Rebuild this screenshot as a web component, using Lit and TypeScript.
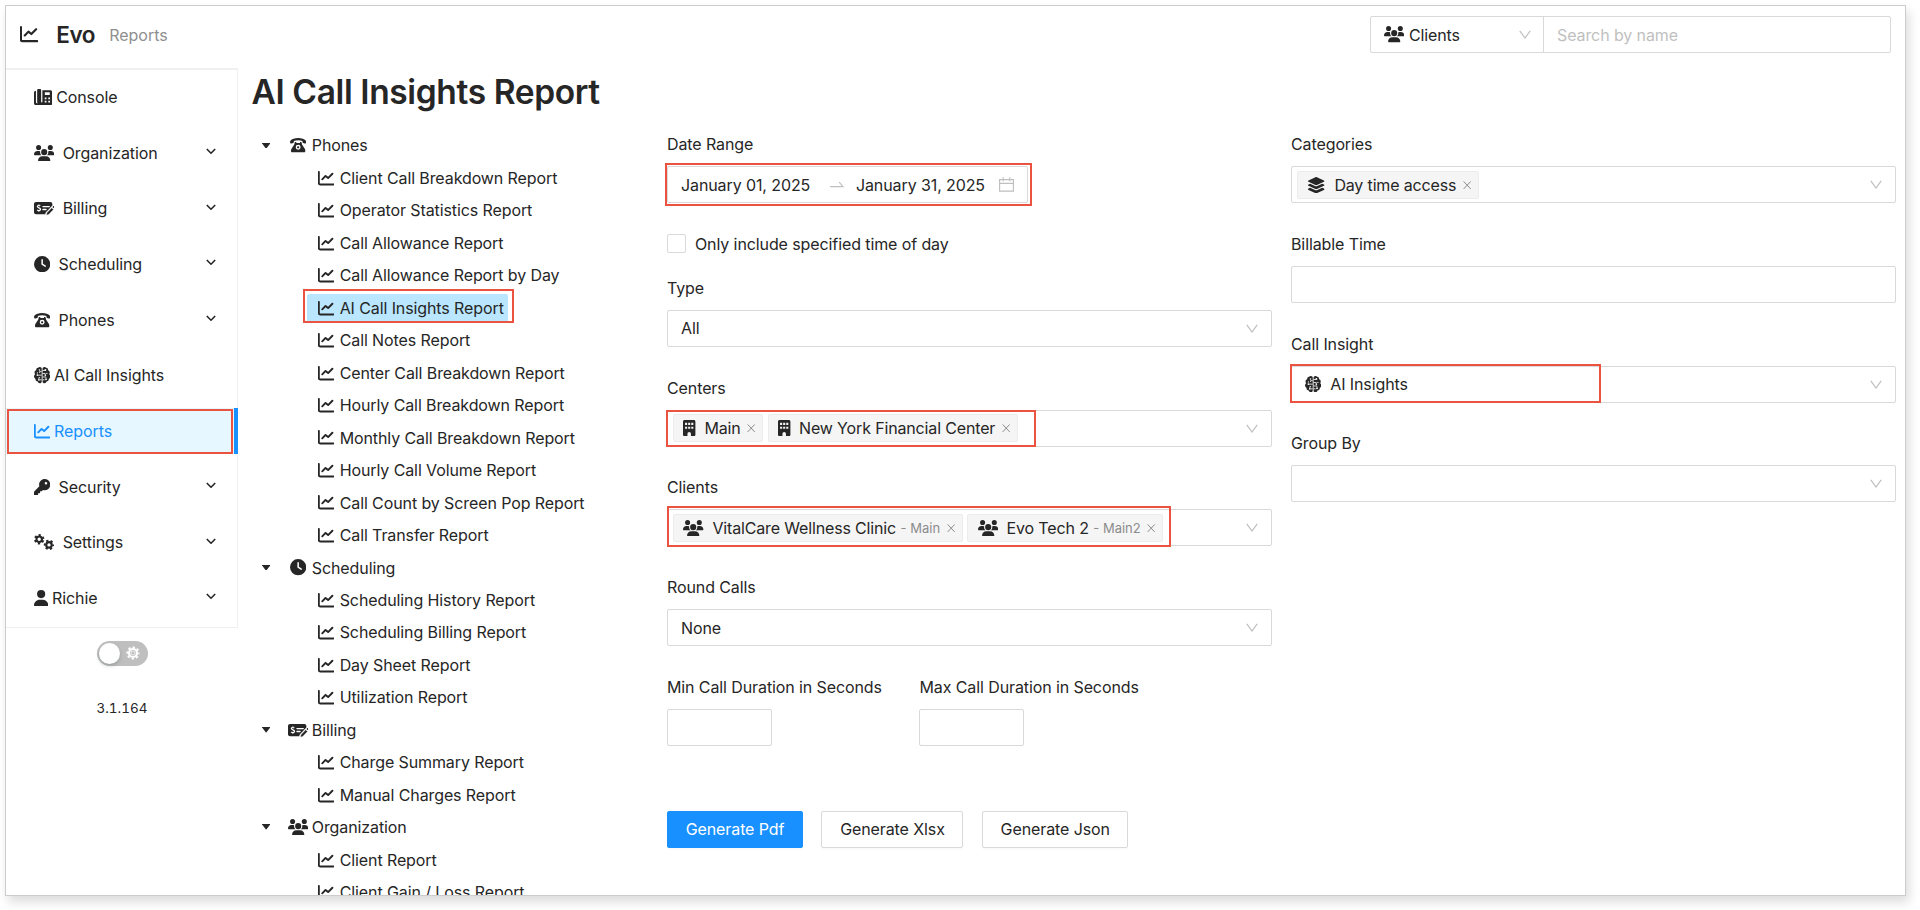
import { LitElement, html, svg, css, nothing } from "lit";
import { customElement } from "lit/decorators.js";
import { classMap } from "lit/directives/class-map.js";

type IconDef = { w: number; h: number; box: string; body: unknown };

const ICONS: Record<string, IconDef> = {
  chart: {
    w: 16.3, h: 16.3, box: "0 0 512 512",
    body: svg`<path d="M26 58V408c0 27 21 46 46 46H486M134 294L237 186L318 254L452 118" fill="none" stroke="currentColor" stroke-width="60" stroke-linecap="round" stroke-linejoin="round"/>`,
  },
  users: {
    w: 20.4, h: 16.3, box: "0 0 640 512",
    body: svg`<path d="M144 0a80 80 0 1 1 0 160A80 80 0 1 1 144 0zM512 0a80 80 0 1 1 0 160A80 80 0 1 1 512 0zM0 298.7C0 239.8 47.8 192 106.7 192h42.7c15.9 0 31 3.5 44.6 9.7c-1.3 7.2-1.9 14.7-1.9 22.3c0 38.2 16.8 72.5 43.3 96c-.2 0-.4 0-.7 0H21.3C9.6 320 0 310.4 0 298.7zM405.3 320c-.2 0-.4 0-.7 0c26.6-23.5 43.3-57.8 43.3-96c0-7.6-.7-15-1.9-22.3c13.6-6.3 28.7-9.7 44.6-9.7h42.7C592.2 192 640 239.8 640 298.7c0 11.8-9.6 21.3-21.3 21.3H405.3zM224 224a96 96 0 1 1 192 0 96 96 0 1 1 -192 0zM128 485.3C128 411.7 187.7 352 261.3 352H378.7C452.3 352 512 411.7 512 485.3c0 14.7-11.9 26.7-26.7 26.7H154.7c-14.7 0-26.7-11.9-26.7-26.7z"/>`,
  },
  console: {
    w: 18.4, h: 16.3, box: "0 0 18 16",
    body: svg`<path d="M1.900 1.600C.8 1.600 0 2.400 0 3.500V14C0 15.200.9 16 2 16H16C17.200 16 18 15.200 18 14V3.200C18 2 17.200 1.200 16 1.200H8.200V12.600A.6.6 0 0 1 7 12.600V1.300C7 .5 6.500 0 5.800 0H4.400C3.700 0 3.100.5 3.100 1.300V12.900A1.100 1.100 0 0 0 4.200 14H3A1.300 1.300 0 0 1 1.900 12.700zM10.600 3.200H15.400V6H10.600zM10.500 8.300H12.200V10H10.500zM14 8.300H15.700V10H14zM10.500 11.600H12.200V13.300H10.500zM14 11.600H15.700V13.300H14z" fill-rule="evenodd"/>`,
  },
  billing: {
    w: 20.4, h: 16.3, box: "0 0 20 16",
    body: svg`<path d="M2 2H16C17.200 2 18 2.900 18 4V5.400L11.500 12.200L11 14H2C.9 14 0 13.100 0 12V4C0 2.900.9 2 2 2z"/><path d="M6.200 5.900C5.800 5.500 5.300 5.400 4.700 5.400C3.900 5.400 3.300 5.800 3.300 6.500C3.300 8.100 6.400 7.400 6.400 9.100C6.400 9.900 5.700 10.400 4.800 10.400C4.100 10.400 3.500 10.200 3.100 9.800M4.800 4.300V5.400M4.800 10.400V11.600" fill="none" stroke="#fff" stroke-width="1.200"/><path d="M8.800 6.500H15M8.800 9.300H11.800" stroke="#fff" stroke-width="1.300" stroke-linecap="round"/><path d="M12.600 12.500L17.300 7.600L19.200 9.400L14.500 14.300L12 15z" stroke="#fff" stroke-width=".5"/><path d="M18 6.900L18.600 6.300C19 5.900 19.400 5.900 19.800 6.300C20.200 6.700 20.200 7.200 19.800 7.600L19.400 8.200z"/>`,
  },
  clock: {
    w: 16.3, h: 16.3, box: "0 0 512 512",
    body: svg`<path d="M256 0a256 256 0 1 1 0 512A256 256 0 1 1 256 0zM232 120V256c0 8 4 15.500 10.700 20l96 64c11 7.400 25.900 4.400 33.300-6.700s4.400-25.900-6.700-33.300L280 243.200V120c0-13.300-10.700-24-24-24s-24 10.700-24 24z"/>`,
  },
  phone: {
    w: 16.3, h: 16.3, box: "0 0 16 16",
    body: svg`<path d="M8 1C4.600 1 1.900 2 .4 3.700C0 4.200 0 4.700.1 5.300L.3 5.900C.5 6.400.9 6.600 1.400 6.400L3.100 5.800C3.600 5.600 3.800 5.300 3.800 4.800V3.900C6.300 3 9.700 3 12.200 3.900V4.800C12.200 5.300 12.400 5.600 12.900 5.800L14.600 6.400C15.100 6.600 15.500 6.400 15.700 5.900L15.900 5.300C16 4.700 16 4.200 15.600 3.700C14.100 2 11.400 1 8 1z"/><path d="M5.200 5H6.200V6H9.800V5H10.800C11.100 5 11.300 5.200 11.400 5.500L11.800 7.300L14.500 11.500C14.800 12 15 12.500 15 13.100V14C15 14.600 14.600 15 14 15H2C1.400 15 1 14.600 1 14V13.100C1 12.500 1.200 12 1.500 11.500L4.200 7.300L4.600 5.500C4.700 5.200 4.900 5 5.200 5zM8 7.700A2.400 2.400 0 1 0 8 12.500A2.400 2.400 0 1 0 8 7.700z" fill-rule="evenodd"/><circle cx="8" cy="10.100" r="1.100"/>`,
  },
  brain: {
    w: 16.3, h: 16.3, box: "0 0 16 16",
    body: svg`<path d="M5.800 0C6.900 0 7.600.8 7.600 1.800V14.200C7.600 15.200 6.800 16 5.700 16C4.700 16 3.900 15.300 3.700 14.300C2.300 14.300 1.300 13.100 1.500 11.700C.6 11.200 0 10.300 0 9.200C0 8.300.4 7.500 1.100 7C.7 6.500.5 6 .5 5.400C.5 4.300 1.200 3.400 2.200 3.100C2 1.700 2.900.8 4 .8C4.400.3 5 0 5.800 0zM10.200 0C9.100 0 8.400.8 8.400 1.800V14.200C8.400 15.200 9.200 16 10.300 16C11.300 16 12.100 15.300 12.300 14.300C13.700 14.300 14.700 13.100 14.500 11.700C15.400 11.200 16 10.300 16 9.200C16 8.300 15.600 7.500 14.900 7C15.300 6.500 15.500 6 15.500 5.400C15.500 4.300 14.800 3.400 13.800 3.100C14 1.700 13.100.8 12 .8C11.600.3 11 0 10.200 0z"/><path d="M7.600 4.600H5.400V5.800M7.600 8H3.800M7.600 12.600H5.600M4.800 12V10.400H6M8.400 3.400H11.200V2.800M8.400 6.400H11V8.200M8.400 9.800H11.800V10.600M8.400 12.600H10.400" stroke="#fff" stroke-width=".8" fill="none"/><g fill="#fff"><circle cx="5.400" cy="2.900" r=".8"/><circle cx="3.300" cy="5.800" r=".6"/><circle cx="3.300" cy="8" r=".8"/><circle cx="4.800" cy="12.600" r=".9"/><circle cx="11.200" cy="2.900" r=".9"/><circle cx="12.600" cy="6.300" r=".6"/><circle cx="11.200" cy="8.100" r=".8"/><circle cx="11.800" cy="12" r=".9"/></g>`,
  },
  key: {
    w: 16.3, h: 16.3, box: "0 0 512 512",
    body: svg`<path d="M336 352c97.200 0 176-78.800 176-176S433.200 0 336 0S160 78.800 160 176c0 18.700 2.900 36.800 8.300 53.700L7 391c-4.500 4.500-7 10.600-7 17v80c0 13.300 10.700 24 24 24h80c13.300 0 24-10.700 24-24V448h40c13.300 0 24-10.700 24-24V384h40c6.400 0 12.500-2.500 17-7l33.300-33.300c16.900 5.400 35 8.300 53.700 8.300zM376 96a40 40 0 1 1 0 80 40 40 0 1 1 0-80z"/>`,
  },
  gears: {
    w: 20.4, h: 16.3, box: "0 0 20 16",
    body: svg`<g fill="none" stroke="currentColor"><circle cx="5.100" cy="5.200" r="2.700" stroke-width="2.100"/><circle cx="5.100" cy="5.200" r="4.200" stroke-width="1.800" stroke-dasharray="2.200 2.198" stroke-dashoffset="-1.100"/><circle cx="14.700" cy="10.700" r="2.700" stroke-width="2.100"/><circle cx="14.700" cy="10.700" r="4.200" stroke-width="1.800" stroke-dasharray="2.200 2.198" stroke-dashoffset="1.100"/></g>`,
  },
  user: {
    w: 14.3, h: 16.3, box: "0 0 448 512",
    body: svg`<path d="M224 256A128 128 0 1 0 224 0a128 128 0 1 0 0 256zm-45.700 48C79.800 304 0 383.800 0 482.300C0 498.700 13.300 512 29.700 512H418.300c16.400 0 29.700-13.300 29.700-29.700C448 383.800 368.200 304 269.700 304H178.300z"/>`,
  },
  building: {
    w: 12.4, h: 16.3, box: "0 0 12 16",
    body: svg`<path d="M1.500 0H10.500C11.300 0 12 .7 12 1.500V14.500C12 15.300 11.300 16 10.500 16H7.700V13.500A1.700 1.700 0 0 0 4.300 13.500V16H1.500C.7 16 0 15.300 0 14.500V1.500C0 .7.7 0 1.500 0zM2 2.800V4.800H4V2.800zM5 2.800V4.800H7V2.800zM8 2.800V4.800H10V2.800zM2 6.600V8.600H4V6.600zM5 6.600V8.600H7V6.600zM8 6.600V8.600H10V6.600z" fill-rule="evenodd"/>`,
  },
  layers: {
    w: 18.4, h: 16.3, box: "0 0 576 512",
    body: svg`<path d="M264.500 5.200c14.900-6.900 32.100-6.900 47 0l218.600 101c8.500 3.900 13.900 12.400 13.900 21.800s-5.400 17.900-13.900 21.800l-218.600 101c-14.900 6.900-32.100 6.900-47 0L45.900 149.800C37.400 145.800 32 137.300 32 128s5.400-17.900 13.900-21.800L264.500 5.200zM476.900 209.600l53.200 24.600c8.500 3.900 13.900 12.400 13.900 21.800s-5.400 17.900-13.900 21.800l-218.600 101c-14.900 6.900-32.100 6.900-47 0L45.900 277.800C37.400 273.800 32 265.300 32 256s5.400-17.900 13.900-21.800l53.200-24.600 152 70.200c23.400 10.800 50.400 10.800 73.800 0l152-70.200zm-152 198.200l152-70.200 53.200 24.600c8.500 3.900 13.900 12.400 13.900 21.800s-5.400 17.900-13.900 21.800l-218.600 101c-14.900 6.900-32.100 6.900-47 0L45.900 405.800C37.400 401.800 32 393.300 32 384s5.400-17.900 13.900-21.800l53.200-24.600 152 70.200c23.400 10.800 50.400 10.800 73.800 0z"/>`,
  },
  down: {
    w: 12, h: 9, box: "0 0 12 9",
    body: svg`<path d="M.8.800L6 8L11.200.8" fill="none" stroke="currentColor" stroke-width="1.200"/>`,
  },
  chevron: {
    w: 10, h: 6.5, box: "0 0 10 6.5",
    body: svg`<path d="M.8 1L5 5.200L9.200 1" fill="none" stroke="currentColor" stroke-width="1.600"/>`,
  },
  close: {
    w: 8.4, h: 8.4, box: "0 0 8 8",
    body: svg`<path d="M.6.400L7.400 7.600M7.400.4L.6 7.600" fill="none" stroke="currentColor" stroke-width=".95"/>`,
  },
  caret: { w: 8.2, h: 5.6, box: "0 0 8 5.5", body: svg`<path d="M.3 0H7.700Q8.200.1 7.900.6L4.400 5.200Q4 5.600 3.600 5.200L.1.600Q-.2.1.3 0z"/>` },
  swap: { w: 14, h: 7, box: "0 0 14 7", body: svg`<path d="M0 5.600H13L9.200 1.200" fill="none" stroke="currentColor" stroke-width="1.100"/>` },
  calendar: {
    w: 15, h: 15, box: "0 0 15 15",
    body: svg`<path d="M.6 2.600H14.400V14.100H.6zM.6 6.400H14.400M4.200.2V4.200M10.800.2V4.200" fill="none" stroke="currentColor" stroke-width="1.150"/>`,
  },
  gear: {
    w: 14, h: 14, box: "0 0 14 14",
    body: svg`<circle cx="7" cy="7" r="4" fill="none" stroke="currentColor" stroke-width="2.200"/><circle cx="7" cy="7" r="5.700" fill="none" stroke="currentColor" stroke-width="1.800" stroke-dasharray="2.400 2.077" stroke-dashoffset="1.200"/><circle cx="7" cy="7" r="1.900" fill="none" stroke="currentColor" stroke-width=".7"/>`,
  },
};

const icon = (name: string, scale = 1) => {
  const i = ICONS[name];
  return html`<svg class="ico" width=${i.w * scale} height=${i.h * scale} viewBox=${i.box} fill="currentColor" preserveAspectRatio="none">${i.body}</svg>`;
};

const MENU = [
  { icon: "console", text: "Console", sub: false, tight: true },
  { icon: "users", text: "Organization", sub: true },
  { icon: "billing", text: "Billing", sub: true },
  { icon: "clock", text: "Scheduling", sub: true },
  { icon: "phone", text: "Phones", sub: true },
  { icon: "brain", text: "AI Call Insights", sub: false, tight: true },
  { icon: "chart", text: "Reports", sub: false, tight: true, active: true },
  { icon: "key", text: "Security", sub: true },
  { icon: "gears", text: "Settings", sub: true },
  { icon: "user", text: "Richie", sub: true, tight: true },
];

const TREE = [
  { icon: "phone", text: "Phones", items: ["Client Call Breakdown Report", "Operator Statistics Report", "Call Allowance Report", "Call Allowance Report by Day", "AI Call Insights Report", "Call Notes Report", "Center Call Breakdown Report", "Hourly Call Breakdown Report", "Monthly Call Breakdown Report", "Hourly Call Volume Report", "Call Count by Screen Pop Report", "Call Transfer Report"] },
  { icon: "clock", text: "Scheduling", items: ["Scheduling History Report", "Scheduling Billing Report", "Day Sheet Report", "Utilization Report"] },
  { icon: "billing", text: "Billing", items: ["Charge Summary Report", "Manual Charges Report"] },
  { icon: "users", text: "Organization", items: ["Client Report", "Client Gain / Loss Report"] },
];

const SELECTED = "AI Call Insights Report";

@customElement("app-root")
export class AppRoot extends LitElement {
  static styles = css`
    :host { display: block; width: 1920px; height: 910px; overflow: hidden; background: #fff; color: #262626;
      font-family: Inter, "Liberation Sans", sans-serif; font-size: 16px; line-height: 24px; letter-spacing: -0.1px; }
    * { box-sizing: border-box; }
    .ico { display: block; flex: none; }
    .shell { display: flow-root; }
    .frame { margin: 5px; width: 1901px; height: 891px; border: 1px solid #ccc; overflow: hidden; background: #fff; box-shadow: 3px 6px 10px rgba(0, 0, 0, .14); }
    header { display: flex; align-items: center; height: 62px; padding: 0 14px 4.800px 14px; }
    .brand { font-size: 22.500px; font-weight: 600; margin-left: 18px; letter-spacing: -.4px; }
    .crumb { color: #8f8f8f; margin-left: 14px; letter-spacing: 0; }
    .search { display: flex; margin-left: auto; width: 521px; height: 37px; border: 1px solid #d9d9d9; border-radius: 2px; }
    .kind { display: flex; align-items: center; width: 173px; padding: 0 12.500px 0 13px; border-right: 1px solid #d9d9d9; gap: 4.500px; }
    .kind .arrow { margin-left: auto; color: #bfbfbf; }
    .hint { color: #bfbfbf; padding: 5.500px 13px; }
    .body { display: flex; height: 827px; }
    aside { width: 232px; flex: none; }
    nav { border: solid #f0f0f0; border-width: 2px 1px 1px 0; height: 560px; padding-top: 3.900px; display: flex; flex-direction: column; gap: 9.170px; }
    .item { display: flex; align-items: center; height: 46.500px; padding: 0 21px 0 27.500px; gap: 8.800px; flex: none; position: relative; }
    .item.tight { gap: 4.300px; }
    .item.active { background: #e6f7ff; color: #1890ff; margin-right: -1px; border-right: 4px solid #1890ff; }
    .item .arrow { margin-left: auto; padding-bottom: 3px; }
    .mark { position: absolute; border: 1.500px solid #ea4a35; pointer-events: none; box-shadow: 0 0 0 .5px rgba(234, 74, 53, .35); border-width: 2px; border-color: #eb5341; box-shadow: none; }
    .m-nav { left: 1px; right: 1px; top: 1px; bottom: 0; }
    .m-leaf { left: -4px; right: -6px; top: -5px; bottom: -1.500px; }
    .m-date { left: -3px; right: -5px; top: -4px; bottom: -4px; }
    .m-centers { left: -2px; width: 370px; top: -1px; bottom: -1px; }
    .m-clients { left: -1px; width: 504px; top: -4px; bottom: -2px; }
    .m-insight { left: -2px; width: 311px; top: -3px; bottom: -1px; }
    .foot { display: flex; flex-direction: column; align-items: center; padding: 12.500px 0 0 0; }
    .switch { display: flex; align-items: center; justify-content: space-between; width: 51px; height: 25.600px; border-radius: 13px; background: #bfbfbf; padding: 0 8px 0 2px; color: #fff; }
    .knob { width: 21px; height: 21px; border-radius: 50%; background: #fff; box-shadow: 0 2px 4px rgba(0, 35, 11, .2); }
    .version { font-size: 13.500px; margin-top: 29.500px; font-variant-numeric: tabular-nums; letter-spacing: 0; }
    main { flex: 1; padding: 3.700px 10.500px 0 13.400px; }
    h1 { margin: 0; font-size: 33.500px; line-height: 40px; font-weight: 600; letter-spacing: -.38px; }
    .cols { display: grid; grid-template-columns: 396.600px 605px 605px; column-gap: 19px; }
    .tree { margin-top: 17.500px; white-space: nowrap; }
    .row { display: flex; align-items: center; height: 32.480px; }
    .caret { width: 28.500px; margin-right: -.6px; flex: none; display: flex; justify-content: center; }
    .node { display: flex; align-items: center; height: 28px; padding: 0 4.600px; border-radius: 2px; position: relative; }
    .node.leaf { margin-left: 55.800px; }
    .node.sel { background: #bae7ff; }
    .nico { width: 27.900px; display: flex; justify-content: center; flex: none; }
    .form { padding-top: 20.600px; }
    .fields { display: flex; flex-direction: column; gap: 28.700px; }
    .field { display: flex; flex-direction: column; gap: 10px; }
    .box { position: relative; display: flex; align-items: center; height: 37px; border: 1px solid #d9d9d9; border-radius: 2px; padding: 0 13px; }
    .box.tags { padding-left: 5px; gap: 4.700px; }
    .box .arrow { margin-left: auto; color: #bfbfbf; }
    .picker { width: 361px; }
    .picker .swap { color: #bfbfbf; margin: 0 11.500px 0 auto; }
    .picker .cal { color: #bfbfbf; margin-left: 14px; }
    .check { display: flex; align-items: center; gap: 9px; height: 24px; margin-bottom: -8.700px; }
    .tick { width: 19px; height: 19px; border: 1px solid #d9d9d9; border-radius: 2px; }
    .tag { display: flex; align-items: center; height: 28px; background: #f5f5f5; border: 1px solid #ececec; border-radius: 2px; padding: 0 6.500px 0 9.500px; letter-spacing: -.15px; }
    .tag .tico { margin-right: 8.500px; }
    .tag .x { color: #8c8c8c; margin-left: 6.500px; }
    .tag small { font-size: 13px; color: #8c8c8c; margin-left: 4.500px; letter-spacing: 0; }
    .insight { gap: 9px; }
    .pair { display: flex; }
    .pair .field { width: 252.500px; }
    .pair .box { width: 105px; }
    .actions { display: flex; gap: 18.500px; margin-top: 65px; }
    button { font: inherit; letter-spacing: inherit; color: inherit; height: 37px; background: #fff; border: 1px solid #d9d9d9; border-radius: 2px; padding: 0; box-shadow: 0 2px 0 rgba(0, 0, 0, .016); width: 142px; }
    button.primary { width: 136px; background: #1890ff; border-color: #1890ff; color: #fff; }
    button.json { width: 146.500px; }
  `;

  private arrow() {
    return html`<span class="arrow">${icon("down")}</span>`;
  }

  private tag(ic: string, text: string, note?: string) {
    return html`<span class="tag"><span class="tico">${icon(ic)}</span>${text}${note ? html`<small>- ${note}</small>` : nothing}<span class="x">${icon("close")}</span></span>`;
  }

  private field(label: string, content: unknown = nothing, cls = "", arrow = true, mark = "") {
    return html`<div class="field"><label>${label}</label>
      <div class="box ${cls}">${content}${arrow ? this.arrow() : nothing}${mark ? html`<span class="mark ${mark}"></span>` : nothing}</div></div>`;
  }

  render() {
    return html`<div class="shell"><div class="frame">
      <header>
        ${icon("chart", 1.12)}<span class="brand">Evo</span><span class="crumb">Reports</span>
        <div class="search"><div class="kind">${icon("users")}Clients${this.arrow()}</div><span class="hint">Search by name</span></div>
      </header>
      <div class="body">
        <aside>
          <nav>
            ${MENU.map((m) => html`<div class=${classMap({ item: true, tight: !!m.tight, active: !!m.active })}>${icon(m.icon)}<span>${m.text}</span>${m.sub ? html`<span class="arrow">${icon("chevron")}</span>` : nothing}${m.active ? html`<span class="mark m-nav"></span>` : nothing}</div>`)}
          </nav>
          <div class="foot"><div class="switch"><span class="knob"></span>${icon("gear")}</div><div class="version">3.1.164</div></div>
        </aside>
        <main>
          <h1>AI Call Insights Report</h1>
          <div class="cols">
            <div class="tree">
              ${TREE.map((g) => html`
                <div class="row"><span class="caret">${icon("caret")}</span><div class="node"><span class="nico">${icon(g.icon)}</span>${g.text}</div></div>
                ${g.items.map((t) => html`<div class="row"><div class=${classMap({ node: true, leaf: true, sel: t === SELECTED })}><span class="nico">${icon("chart")}</span>${t}${t === SELECTED ? html`<span class="mark m-leaf"></span>` : nothing}</div></div>`)}`)}
            </div>
            <div class="form">
              <div class="fields">
                ${this.field("Date Range", html`<span>January 01, 2025</span><span class="swap">${icon("swap")}</span><span>January 31, 2025</span><span class="cal">${icon("calendar")}</span>`, "picker", false, "m-date")}
                <div class="check"><span class="tick"></span>Only include specified time of day</div>
                ${this.field("Type", "All")}
                ${this.field("Centers", html`${this.tag("building", "Main")}${this.tag("building", "New York Financial Center")}`, "tags", true, "m-centers")}
                ${this.field("Clients", html`${this.tag("users", "VitalCare Wellness Clinic", "Main")}${this.tag("users", "Evo Tech 2", "Main2")}`, "tags", true, "m-clients")}
                ${this.field("Round Calls", "None")}
                <div class="pair">${this.field("Min Call Duration in Seconds", nothing, "", false)}${this.field("Max Call Duration in Seconds", nothing, "", false)}</div>
              </div>
              <div class="actions"><button class="primary">Generate Pdf</button><button>Generate Xlsx</button><button class="json">Generate Json</button></div>
            </div>
            <div class="form">
              <div class="fields">
                ${this.field("Categories", this.tag("layers", "Day time access"), "tags")}
                ${this.field("Billable Time", nothing, "", false)}
                ${this.field("Call Insight", html`${icon("brain")}<span>AI Insights</span>`, "insight", true, "m-insight")}
                ${this.field("Group By")}
              </div>
            </div>
          </div>
        </main>
      </div>
    </div></div>`;
  }
}
